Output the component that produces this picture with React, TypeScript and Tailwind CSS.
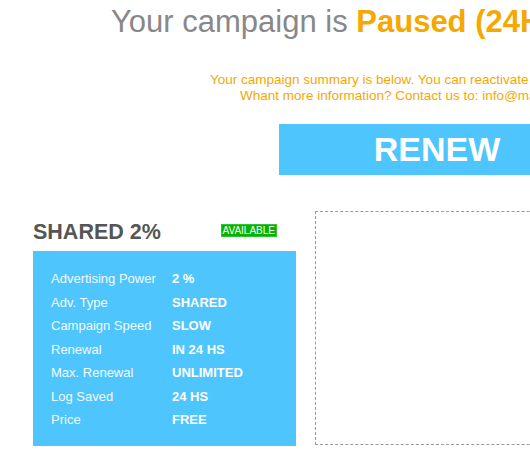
const rows = [
  { label: "Advertising Power", value: "2 %" },
  { label: "Adv. Type", value: "SHARED" },
  { label: "Campaign Speed", value: "SLOW" },
  { label: "Renewal", value: "IN 24 HS" },
  { label: "Max. Renewal", value: "UNLIMITED" },
  { label: "Log Saved", value: "24 HS" },
  { label: "Price", value: "FREE" },
];

export default function App() {
  return (
    <div className="w-[530px] h-[456px] overflow-hidden bg-white font-['Liberation_Sans',Arial,sans-serif]">
      {/* Header */}
      <div className="pt-[4px] pl-[111px] whitespace-nowrap text-[31px] leading-[36px] text-[#888888]">
        Your campaign is <span className="font-bold text-[#f5a800]">Paused (24HS)</span>
      </div>

      <div className="mt-[32px] whitespace-nowrap text-[13.5px] leading-[16px] text-[#f5a800]">
        <p className="pl-[210px]">Your campaign summary is below. You can reactivate your campaign anytime.</p>
        <p className="pl-[240px]">Whant more information? Contact us to: info@mail.com</p>
      </div>

      <div className="mt-[20px] pl-[279px]">
        <button className="w-[316px] h-[51px] shrink-0 bg-[#4ec5fd] text-white font-bold text-[34px] leading-[51px] text-center">
          RENEW
        </button>
      </div>

      {/* Plan + preview */}
      <div className="mt-[36px] pl-[33px] flex gap-[19px]">
        <div className="w-[263px] shrink-0 pt-[8px]">
          <div className="flex items-start justify-between pr-[19px] mb-[6px]">
            <h2 className="text-[21.5px] leading-[26px] font-bold text-[#555555]">SHARED 2%</h2>
            <span className="mt-[5px] h-[13px] px-[1px] bg-[#00b400] border border-[#33c233] text-white text-[10px] leading-[11px]">
              AVAILABLE
            </span>
          </div>
          <div className="bg-[#4ec5fd] pt-[16px] pb-[14px] pl-[18px]">
            {rows.map((r) => (
              <div key={r.label} className="flex text-[13px] leading-[23.5px]">
                <span className="w-[121px] text-[#f2faff]">{r.label}</span>
                <span className="font-bold text-white">{r.value}</span>
              </div>
            ))}
          </div>
        </div>
        <div className="w-[260px] h-[234px] shrink-0 border border-dashed border-[#999999]" />
      </div>
    </div>
  );
}
